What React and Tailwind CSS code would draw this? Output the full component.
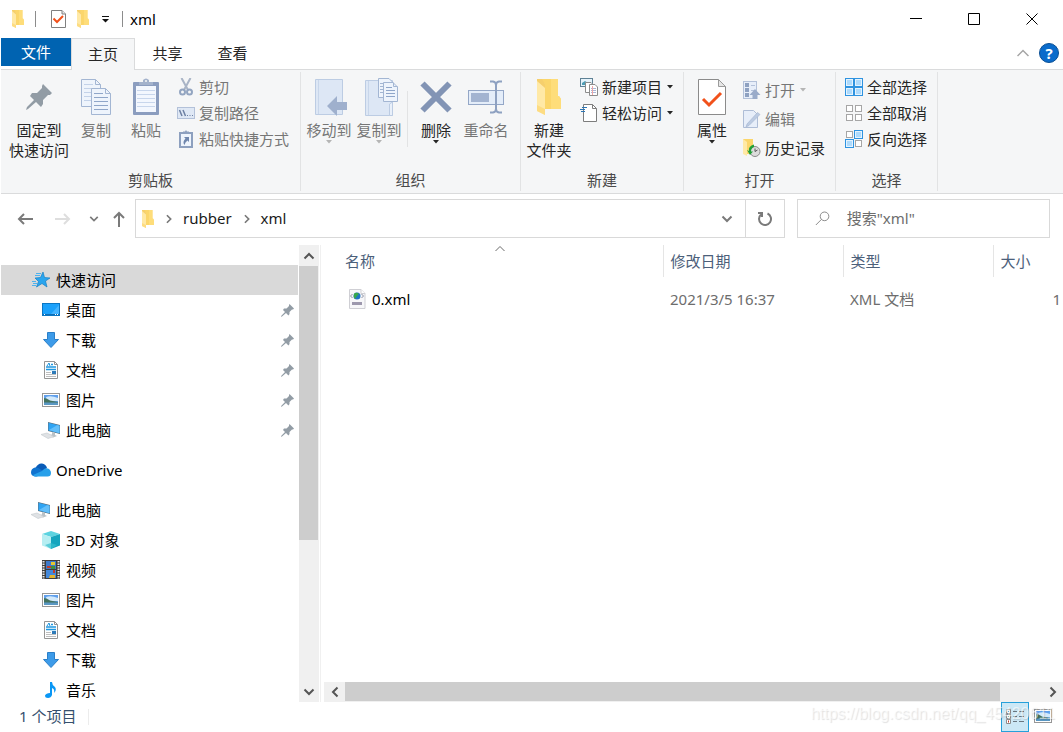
import { Fragment } from "react";

const FolderIcon = ({ className }) => (
    <svg className={className} viewBox="0 0 24 36" aria-hidden="true">
        <path d="M3 0H21V17H22L24 20V30H6Z" fill="#fbd66b" />
        <path d="M14 0H21V17H22L24 20V30H14Z" fill="#ffdf80" opacity=".7" />
        <path d="M0 0L8 5V36L0 32Z" fill="#ffe9a6" />
        <path d="M0 0H5L8 5V9L0 2Z" fill="#f6cf6c" />
        <path d="M0 26L8 30V36L0 32Z" fill="#fddc82" />
    </svg>
);

const CheckDocIcon = ({ className }) => (
    <svg className={className} viewBox="0 0 28 36" aria-hidden="true">
        <path d="M.5 .5H20.5L27.5 7.5V35.5H.5Z" fill="#fff" stroke="#8b8b8b" />
        <path d="M20.5 .5V7.5H27.5Z" fill="#e6e6e6" stroke="#9b9b9b" />
        <path d="M5 20L11 26L23 14" fill="none" stroke="#f1511b" strokeWidth="3" />
    </svg>
);

const SmallCheckDocIcon = () => (
    <svg width="15" height="18" viewBox="0 0 15 18" aria-hidden="true">
        <path d="M.5 .5H11L14.500 4V17.500H.5Z" fill="#fff" stroke="#808080" />
        <path d="M11 .5V4H14.500" fill="#e6e6e6" stroke="#808080" />
        <path d="M2.500 8.500L6 12L12 6" fill="none" stroke="#f1511b" strokeWidth="2" />
    </svg>
);

const PinIcon = ({ className }) => (
    <svg className={className} viewBox="0 0 26 26" aria-hidden="true">
        <path d="M17 0L26 9L24 11H22L17 16V20L15 23L10 18L2 25L0 26L1 23L8 16L4 12L6 9H11L16 4V2Z" fill="#929ca5" />
    </svg>
);

const CopyIcon = () => (
    <svg width="30" height="36" viewBox="0 0 30 36" fill="#eef4fc" stroke="#a3b6d3" aria-hidden="true">
        <path d="M.5 .5H14.5L19.5 5.5V27.5H.5Z" />
        <path d="M14.5 .5V5.5H19.5" fill="none" />
        <path d="M3 5.5H12M3 9.5H17M3 13.5H17M3 17.5H17M3 21.5H17" stroke="#c3d2e9" />
        <path d="M10.5 9.5H24.5L29.5 14.5V35.5H10.5Z" />
        <path d="M24.5 9.5V14.5H29.5" fill="none" />
        <path d="M13 14.5H22M13 18.5H27M13 22.5H27M13 26.5H27M13 30.5H27" stroke="#8fa6c9" />
    </svg>
);

const PasteIcon = () => (
    <svg width="26" height="38" viewBox="0 0 26 38" aria-hidden="true">
        <rect y="4" width="26" height="33" rx="1" fill="#8b9dbf" />
        <rect x="3" y="8" width="20" height="26" fill="#f3f7fe" />
        <path d="M4 12.5H22M4 16.5H22M4 20.5H22M4 24.5H22M4 28.5H22" stroke="#c8d6ec" />
        <path d="M6 4H10V2Q13 -1 16 2V4H20V7H6Z" fill="#a3b2cc" />
        <circle cx="13" cy="3" r="1" fill="#f5f6f7" />
    </svg>
);

const MoveToIcon = () => (
    <svg width="38" height="38" viewBox="-4 0 38 38" aria-hidden="true">
        <path d="M1.5 1.5H28.5V36.5H1.5Z" fill="#dde7f5" stroke="#bccce3" />
        <path d="M4.5 2V36" stroke="#c8d6ea" />
        <path d="M13 28L23 18V24H33V32H23V38Z" fill="#9fb0cd" />
    </svg>
);

const CopyToIcon = () => (
    <svg width="38" height="38" viewBox="-4 0 38 38" aria-hidden="true">
        <path d="M1.5 2.5H28.5V37.5H1.5Z" fill="#dde7f5" stroke="#bccce3" />
        <path d="M4.5 3V37" stroke="#c8d6ea" />
        <path d="M25.5 37.5V26L28.5 24V37.5Z" fill="#e9f0fa" stroke="#bccce3" />
        <path d="M14.5 .5H25L28.5 4V19.5H14.5Z" fill="#eef4fc" stroke="#a3b6d3" />
        <path d="M16 5.5H20M16 8.5H20M16 11.5H20M16 14.5H20" stroke="#a3b6d3" />
        <path d="M19.5 4.5H29L33.5 9V23.5H19.5Z" fill="#eef4fc" stroke="#a3b6d3" />
        <path d="M29.5 4.5V8.5H33.5" fill="none" stroke="#a3b6d3" />
        <path d="M22 9.5H28M22 12.5H31M22 15.5H31M22 18.5H31" stroke="#8fa6c9" />
    </svg>
);

const DeleteIcon = () => (
    <svg width="32" height="32" viewBox="0 0 32 32" stroke="#8294b5" strokeWidth="6" aria-hidden="true">
        <path d="M2.500 2.500L29.500 29.500M29.500 2.500L2.500 29.500" />
    </svg>
);

const RenameIcon = () => (
    <svg width="38" height="34" viewBox="-1 0 38 34" aria-hidden="true">
        <rect x=".5" y="10.500" width="35" height="14" fill="#e4edf9" stroke="#94a7c7" />
        <rect x="3" y="13" width="18" height="9" fill="#a3b4d1" />
        <path d="M22 1.500H25Q28 2 28 5V29Q28 32 25 32.500H22M34 1.500H31Q28 2 28 5M34 32.500H31Q28 32 28 29" fill="none" stroke="#8ea1c1" strokeWidth="2" />
    </svg>
);

const CutIcon = () => (
    <svg width="18" height="18" viewBox="0 0 18 18" fill="none" stroke="#93a5c1" aria-hidden="true">
        <path d="M4.500 0L11 12M13.500 0L7 12" strokeWidth="2" stroke="#a9b4c6" />
        <circle cx="5.500" cy="14" r="2.500" strokeWidth="2" />
        <circle cx="12.500" cy="14" r="2.500" strokeWidth="2" />
    </svg>
);

const CopyPathIcon = () => (
    <svg width="18" height="12" viewBox="0 0 18 12" aria-hidden="true">
        <rect x=".5" y=".5" width="17" height="11" fill="#dfe8f5" stroke="#b3c1d9" />
        <path d="M2.500 3L5 9M6 3L8.500 9" stroke="#6d80a3" strokeWidth="1.500" />
        <path d="M10 8.500H11M12.500 8.500H13.500M15 8.500H16" stroke="#6d80a3" />
    </svg>
);

const ShortcutIcon = () => (
    <svg width="18" height="18" viewBox="0 0 18 18" aria-hidden="true">
        <rect x="3" y="3" width="12" height="14" fill="#eef4fc" stroke="#8da0bf" strokeWidth="2" />
        <path d="M6 1.500H8L9 0L10 1.500H12V4H6Z" fill="#8da0bf" />
        <path d="M7 7H12V12L10.500 10.500Q8 12 7.500 15Q5 12 8.500 8.500Z" fill="#6f86ad" />
    </svg>
);

const NewItemIcon = () => (
    <svg width="18" height="18" viewBox="0 0 18 18" aria-hidden="true">
        <rect x=".5" y=".5" width="12" height="8" fill="#e6f3fb" stroke="#5e8195" />
        <path d="M2 7V5L5 3L8 5V7Z" fill="#4d9db5" />
        <path d="M5.500 4.500H11L13.500 7V14.500H5.500Z" fill="#fff" stroke="#8c8c8c" />
        <path d="M9.500 6.500H15L17.500 9V17.500H9.500Z" fill="#fff" stroke="#8c8c8c" />
        <path d="M11 10.500H16M11 12.500H16M11 14.500H16" stroke="#aab6d6" />
        <path d="M12.500 8V17" stroke="#f0a5a5" />
    </svg>
);

const EasyAccessIcon = () => (
    <svg width="18" height="18" viewBox="0 0 18 18" aria-hidden="true">
        <path d="M3.500 .5H12.500L16.500 4.500V17.500H3.500Z" fill="#fff" stroke="#7d7d7d" />
        <path d="M12.500 .5V4.500H16.500" fill="none" stroke="#7d7d7d" />
        <path d="M0 5.500H5M2 3.500H7M1 7.500H5" stroke="#2c76b5" />
    </svg>
);

const OpenIcon = () => (
    <svg width="18" height="18" viewBox="0 0 18 18" aria-hidden="true">
        <rect x=".5" y=".5" width="13" height="17" fill="#e7eef9" stroke="#b3c1d9" />
        <path d="M2 2H6V6H2ZM2 7H6V11H2ZM2 12H6V16H2Z" fill="#8ea1c1" />
        <path d="M8 4.500H12M8 9.500H12" stroke="#b3c1d9" />
        <path d="M12 8L17.500 14H14.500V18H9.500V14H6.500Z" fill="#9aabc9" />
    </svg>
);

const EditIcon = () => (
    <svg width="18" height="18" viewBox="0 0 18 18" aria-hidden="true">
        <path d="M.5 .5H10.500L14.500 4.500V17.500H.5Z" fill="#e7eef9" stroke="#aebdd6" />
        <path d="M4 14L14.500 2.500L17 4.500L6 15.500L3 17Z" fill="#bccbe2" stroke="#a3b3cf" strokeWidth=".6" />
    </svg>
);

const HistoryIcon = () => (
    <svg width="18" height="18" viewBox="0 0 18 18" aria-hidden="true">
        <path d="M0 0H10V15H3Z" fill="#fbd66b" />
        <path d="M0 0L4 3V17L0 15Z" fill="#ffe9a6" />
        <circle cx="12" cy="12.500" r="5" fill="#dcdcdc" stroke="#8a8a8a" />
        <path d="M12 9.500V12.500L14.500 11" fill="none" stroke="#555" />
        <path d="M11 5.500Q5 7 6 12L4 11L7 16L10 12.500L8 12.500Q8 9 11 8Z" fill="#21a038" />
    </svg>
);

function SelectIcon({ on }) {
    return (
        <svg width="18" height="18" viewBox="0 0 18 18" aria-hidden="true">
            {[[0, 0], [9, 0], [0, 9], [9, 9]].map(([x, y], i) => on[i] == '1' ?
                <g key={i}>
                    <rect x={x + .5} y={y + .5} width="8" height="8" fill="#e4f3fe" stroke="#2f93e0" />
                    <rect x={x + 2} y={y + 2} width="5" height="5" fill="#addafc" />
                </g> :
                <rect key={i} x={x + 1.5} y={y + 1.5} width="6" height="6" fill="#fff" stroke="#a6a6a6" />
            )}
        </svg>
    );
}

const StarIcon = () => (
    <svg width="18" height="18" viewBox="0 0 18 18" aria-hidden="true">
        <path d="M11 1L12.500 6.500L18 7L13.500 10L15 16L10 12.500L4.500 16L6.500 10.500L3 7L8.500 6.500Z" fill="#2aa5ee" stroke="#1580c4" strokeWidth=".7" />
        <path d="M4 2.500H9M3 4.500H8M0 10.500H4M1 12.500H5M0 14.500H4" stroke="#4db2ee" />
    </svg>
);

const DesktopIcon = () => (
    <svg width="18" height="18" viewBox="0 0 18 18" aria-hidden="true">
        <rect x=".5" y="2.500" width="17" height="12" fill="#1ba1fb" stroke="#0a76c4" />
        <path d="M9 13L17 4V13Z" fill="#45b4ff" />
        <path d="M1 13.500H17" stroke="#0d6db4" />
        <path d="M2 13.500H3M13 13.500H14M15 13.500H16" stroke="#fff" />
    </svg>
);

const DownloadIcon = () => (
    <svg width="18" height="18" viewBox="0 0 18 18" aria-hidden="true">
        <path d="M5.500 1.500H12.500V8.500H16.500L9 16.500L1.500 8.500H5.500Z" fill="#3d9be9" stroke="#2b7fc8" />
    </svg>
);

const DocumentIcon = () => (
    <svg width="18" height="18" viewBox="0 0 18 18" aria-hidden="true">
        <path d="M2.500 .5H12.500L15.500 3.500V17.500H2.500Z" fill="#fff" stroke="#949494" />
        <path d="M12.500 .5V3.500H15.500" fill="none" stroke="#949494" />
        <path d="M5 5L7 2L8 5" fill="none" stroke="#1e96e0" />
        <path d="M9 3.500H11M4 6H14M4 8.500H14" stroke="#1e96e0" strokeWidth="1.500" />
        <path d="M4 11.500H9M4 13.500H14M4 15.500H14" stroke="#bdbdbd" />
        <rect x="10" y="10" width="4" height="3" fill="#2d7ab8" />
    </svg>
);

const PictureIcon = () => (
    <svg width="18" height="18" viewBox="0 0 18 18" aria-hidden="true">
        <rect x=".5" y="2.500" width="17" height="13" fill="#fff" stroke="#979797" />
        <rect x="2" y="4" width="14" height="10" fill="#5f9fec" />
        <path d="M4 6Q9 4 16 7V10H5Z" fill="#d2e9fb" />
        <path d="M2 7Q5 7 8 9.500L16 11V12H2Z" fill="#44735f" />
        <rect x="2" y="11.500" width="14" height="2.500" fill="#5a98c4" />
    </svg>
);

const PcIcon = () => (
    <svg width="20" height="18" viewBox="0 0 20 18" aria-hidden="true">
        <path d="M7 1L19 4V13L7 10Z" fill="#5c6f7c" />
        <path d="M7.500 1.800L18.500 4.500V12.300L7.500 9.500Z" fill="#2fa4f3" />
        <path d="M8 9L16 4.200L18.500 4.800V12.200Z" fill="#63bffa" />
        <path d="M11 11L14 12V14L16 15L12 16.500L7 14.500L11 13.500Z" fill="#b9c1c6" />
        <path d="M0 13.500L6 12L13 15.500L7 17.500Z" fill="#dfe2e5" stroke="#c3c8cc" strokeWidth=".6" />
    </svg>
);

const OneDriveIcon = () => (
    <svg width="20" height="14" viewBox="0 0 20 14" aria-hidden="true">
        <path d="M4.500 5Q7 0 11 .5Q15 1 16 5L10 9Z" fill="#0a5cb8" />
        <path d="M4 13.500Q0 13 0 9.500Q0 5.500 4 4.500Q7 4 9 6L14 9L6 13.500Z" fill="#1173cf" />
        <path d="M12 7Q14 4.500 17 5.500Q20 7 20 10Q20 13.500 16.500 13.500H4Q2.500 13 2 12L11 8Z" fill="#28a0ea" />
    </svg>
);

const CubeIcon = () => (
    <svg width="18" height="18" viewBox="0 0 18 18" aria-hidden="true">
        <path d="M0 3L9 0L18 3L9 6Z" fill="#5cd3e0" />
        <path d="M0 3L9 6V18L0 14.500Z" fill="#b6eef2" />
        <path d="M18 3L9 6V18L18 14.500Z" fill="#15a5be" />
        <path d="M3 14L9 12L15 14L9 18Z" fill="#38c0cf" opacity=".7" />
    </svg>
);

const VideoIcon = () => (
    <svg width="18" height="20" viewBox="0 0 18 20" aria-hidden="true">
        <rect width="18" height="19" fill="#3d3d3d" />
        <path d="M1.500 1V19M16.500 1V19" stroke="#e5e5e5" strokeWidth="2" strokeDasharray="1.500 1" />
        <rect x="4" y="1" width="10" height="8" fill="#3d79c9" />
        <rect x="4" y="10" width="10" height="8" fill="#4388da" />
        <path d="M9 2H13V5H9Z" fill="#e5c72e" />
        <path d="M5 6H9V8H5ZM11 10H13V13H11Z" fill="#c23b2c" />
        <path d="M9 6H13V9H9Z" fill="#3d8d3c" />
        <path d="M8 15H13V18H7Z" fill="#e5b42e" />
    </svg>
);

const MusicIcon = () => (
    <svg width="18" height="18" viewBox="0 0 18 18" aria-hidden="true">
        <path d="M8 1H10Q10 4 13 6Q15 9 12 12Q13 8 10 7V14Q9 17 6 17Q3 17 3 14.500Q4 12 8 12Z" fill="#0a97f5" />
    </svg>
);

const XmlIcon = () => (
    <svg width="18" height="20" viewBox="0 0 18 20" aria-hidden="true">
        <path d="M1.500 .5H13L17 4.500V19.500H1.500Z" fill="#f7f7f9" stroke="#cfcfd4" />
        <path d="M13 .5V4.500H17" fill="#fff" stroke="#cfcfd4" />
        <path d="M4.500 5L2.500 7L4.500 9M13.500 5L15.500 7L13.500 9" fill="none" stroke="#8b8fa1" />
        <circle cx="9" cy="7" r="3.500" fill="#1f74c4" />
        <path d="M7 4Q9 3 11 5L9 7L7 10Q5 8 6 5Z" fill="#37a84a" />
        <rect x="4" y="13" width="10" height="3" fill="#9d98ad" />
    </svg>
);

const DetailsIcon = () => (
    <svg width="18" height="18" viewBox="0 0 18 18" aria-hidden="true">
        <path d="M.5 1.500H4.500V5.500H.5ZM.5 6.500H4.500V10.500H.5ZM.5 11.500H4.500V15.500H.5Z" fill="#fff" stroke="#8c8c8c" />
        <path d="M2 3.500H3" stroke="#2272b9" />
        <path d="M2 8.500H3" stroke="#2e8f4e" />
        <path d="M2 13.500H3" stroke="#c0392b" strokeWidth="2" />
        <path d="M7 3.500H11M13 3.500H18M7 8.500H11M13 8.500H18M7 13.500H11M13 13.500H18" stroke="#6b7780" />
    </svg>
);

// chevron pointing up, turned with a rotate class where needed
const Chevron = ({ className }) => (
    <svg className={className} viewBox="0 0 12 12" fill="none" stroke="currentColor" strokeWidth="2" aria-hidden="true">
        <path d="M1.500 8.500L6 4L10.500 8.500" />
    </svg>
);

const Caret = ({ className = '' }) => (
    <svg className={className} width="6" height="4" viewBox="0 0 6 4" fill="currentColor" aria-hidden="true">
        <path d="M0 0H6L3 3.500Z" />
    </svg>
);

const Arrow = ({ className }) => (
    <svg className={className} width="16" height="16" viewBox="0 0 16 16" fill="none" stroke="currentColor" strokeWidth="2" aria-hidden="true">
        <path d="M16 8H2M7 3L2 8L7 13" />
    </svg>
);

function BigButton({ icon, lines, wide, disabled, caret }) {
    return (
        <button disabled={disabled} className={`flex shrink-0 flex-col items-center pt-[7px] leading-5 ${wide ? 'w-16' : 'w-[50px]'} ${disabled ? 'text-[#767676]' : 'text-[#262626]'}`}>
            <span className="flex h-10 items-center justify-center">{icon}</span>
            <span className="mt-[3px] flex flex-col whitespace-nowrap">
                {lines.map(l => <span key={l}>{l}</span>)}
            </span>
            {caret && <Caret className={disabled ? 'text-[#b5b5b5]' : ''} />}
        </button>
    );
}

function SmallButton({ icon, label, disabled, caret }) {
    return (
        <button disabled={disabled} className={`flex items-center gap-1 whitespace-nowrap ${disabled ? 'text-[#767676]' : 'text-[#262626]'}`}>
            <span className="flex w-[18px] justify-center">{icon}</span>
            {label}
            {caret && <Caret className={`ml-px ${disabled ? 'text-[#b5b5b5]' : ''}`} />}
        </button>
    );
}

function Group({ title, className, children }) {
    return (
        <section aria-label={title} className={`my-0.5 flex shrink-0 flex-col justify-between border-r border-[#e2e3e4] ${className}`}>
            <div className="-mt-0.5 flex pl-[3px]">{children}</div>
            <div className="pb-px text-center leading-5 text-[#4a4a4a]">{title}</div>
        </section>
    );
}

const Column = ({ tall, children }) => (
    <div className={`grid content-start pl-1.5 ${tall ? 'auto-rows-[29px] pt-[5px]' : 'auto-rows-[26px] pt-1'}`}>{children}</div>
);

function Ribbon() {
    return (
        <div className="ml-px flex h-[125px] shrink-0 overflow-hidden border-y border-[#dadbdc] bg-[#f5f6f7]">
            <Group title="剪贴板" className="w-[300px]">
                <div className="ml-[3px] flex">
                    <BigButton icon={<PinIcon className="h-[26px] w-[26px]" />} lines={['固定到', '快速访问']} wide />
                    <BigButton icon={<CopyIcon />} lines={['复制']} disabled />
                    <BigButton icon={<PasteIcon />} lines={['粘贴']} disabled />
                </div>
                <Column>
                    <SmallButton icon={<CutIcon />} label="剪切" disabled />
                    <SmallButton icon={<CopyPathIcon />} label="复制路径" disabled />
                    <SmallButton icon={<ShortcutIcon />} label="粘贴快捷方式" disabled />
                </Column>
            </Group>
            <Group title="组织" className="w-[220px]">
                <BigButton icon={<MoveToIcon />} lines={['移动到']} disabled caret />
                <BigButton icon={<CopyToIcon />} lines={['复制到']} disabled caret />
                <div className="mx-[3px] mt-[21px] h-14 w-px bg-[#e2e3e4]"></div>
                <BigButton icon={<DeleteIcon />} lines={['删除']} caret />
                <BigButton icon={<RenameIcon />} lines={['重命名']} disabled />
            </Group>
            <Group title="新建" className="w-[163px]">
                <BigButton icon={<FolderIcon className="h-9 w-6" />} lines={['新建', '文件夹']} />
                <Column>
                    <SmallButton icon={<NewItemIcon />} label="新建项目" caret />
                    <SmallButton icon={<EasyAccessIcon />} label="轻松访问" caret />
                </Column>
            </Group>
            <Group title="打开" className="w-[152px]">
                <BigButton icon={<CheckDocIcon className="h-9 w-7" />} lines={['属性']} caret />
                <Column tall>
                    <SmallButton icon={<OpenIcon />} label="打开" disabled caret />
                    <SmallButton icon={<EditIcon />} label="编辑" disabled />
                    <SmallButton icon={<HistoryIcon />} label="历史记录" />
                </Column>
            </Group>
            <Group title="选择" className="w-[102px]">
                <Column>
                    <SmallButton icon={<SelectIcon on="1111" />} label="全部选择" />
                    <SmallButton icon={<SelectIcon on="0000" />} label="全部取消" />
                    <SmallButton icon={<SelectIcon on="0110" />} label="反向选择" />
                </Column>
            </Group>
        </div>
    );
}

function TitleBar() {
    return (
        <header className="flex h-[38px] shrink-0 items-center pl-3">
            <FolderIcon className="h-[18px] w-3" />
            <div className="ml-[11px] h-4 w-px bg-[#8c8c8c]"></div>
            <button aria-label="属性" className="ml-[15px]"><SmallCheckDocIcon /></button>
            <button aria-label="新建文件夹" className="ml-[11px]"><FolderIcon className="h-[18px] w-3" /></button>
            <button aria-label="自定义快速访问工具栏" className="ml-[13px]">
                <svg width="7" height="8" viewBox="0 0 7 8" aria-hidden="true">
                    <path d="M0 1.500H7" stroke="#111" />
                    <path d="M0 4H7L3.500 7.500Z" fill="#111" />
                </svg>
            </button>
            <div className="ml-[13px] h-4 w-px bg-[#8c8c8c]"></div>
            <h1 className="ml-[7px] flex-grow">xml</h1>
            <div className="mr-0.5 flex h-full">
                {[['最小化', 'M0 5.500H12'], ['最大化', 'M.5 .5H11.500V11.500H.5Z'], ['关闭', 'M.5 .5L11.500 11.500M11.500 .5L.5 11.500']].map(([name, d]) => (
                    <button key={name} aria-label={name} className="flex w-[58px] items-center justify-center">
                        <svg width="12" height="12" viewBox="0 0 12 12" fill="none" stroke="#000" aria-hidden="true"><path d={d} /></svg>
                    </button>
                ))}
            </div>
        </header>
    );
}

function Tabs() {
    return (
        <nav className="relative z-10 ml-px flex h-[31px] shrink-0 text-[#262626]">
            <button className="h-7 w-[70px] bg-[#0063b1] text-white">文件</button>
            <button className="-mb-px h-8 w-16 border border-b-0 border-[#dadbdc] bg-[#f5f6f7] pb-0.5">主页</button>
            <button className="w-[65px] pb-0.5">共享</button>
            <button className="w-[65px] pb-0.5">查看</button>
            <div className="flex flex-grow items-center justify-end gap-2.5 pr-1 pb-px">
                <button aria-label="最小化功能区" className="text-[#a5a5a5]">
                    <svg width="12" height="8" viewBox="0 0 12 8" fill="none" stroke="currentColor" strokeWidth="1.500" aria-hidden="true"><path d="M.5 7L6 1.500L11.500 7" /></svg>
                </button>
                <button aria-label="帮助" className="h-5 w-5 rounded-full border border-[#0a4f94] bg-[#0a6bcb] text-center leading-[18px] font-bold text-white">?</button>
            </div>
        </nav>
    );
}

function AddressBar() {
    return (
        <div className="mt-[5px] flex h-[39px] shrink-0 items-center pr-[13px] pl-[17px] text-[#7a7a7a]">
            <button aria-label="后退"><Arrow /></button>
            <button aria-label="前进" disabled className="ml-[22px] text-[#dedede]"><Arrow className="rotate-180" /></button>
            <button aria-label="最近浏览的位置" className="ml-[18px]"><Chevron className="h-2.5 w-2.5 rotate-180" /></button>
            <button aria-label="上移" className="ml-3"><Arrow className="rotate-90" /></button>
            <div className="ml-2 flex h-full flex-grow items-center border border-[#d9d9d9] pl-1.5 text-[#1a1a1a]">
                <FolderIcon className="h-[18px] w-3" />
                {['rubber', 'xml'].map(p => (
                    <Fragment key={p}>
                        <Chevron className="mr-[9px] ml-2.5 h-2.5 w-2.5 rotate-90 text-[#7a7a7a]" />
                        <button className="pb-px">{p}</button>
                    </Fragment>
                ))}
                <button aria-label="上一个位置" className="mr-3 ml-auto text-[#7a7a7a]"><Chevron className="h-3 w-3 rotate-180" /></button>
                <button aria-label="刷新" className="flex h-full w-[39px] items-center justify-center border-l border-[#d9d9d9] text-[#7a7a7a]">
                    <svg width="16" height="16" viewBox="0 0 16 16" fill="none" stroke="currentColor" strokeWidth="2" aria-hidden="true">
                        <path d="M10.500 2.500A6 6 0 1 1 4 3.500" />
                        <path d="M1 2H5V6" />
                    </svg>
                </button>
            </div>
            <label className="ml-3 flex h-full w-[253px] shrink-0 items-center border border-[#d9d9d9] pl-[17px]">
                <svg width="17" height="17" viewBox="0 0 17 17" fill="none" stroke="#7a7a7a" aria-hidden="true">
                    <circle cx="11" cy="6" r="5" />
                    <path d="M7.500 9.500L1 16" />
                </svg>
                <input aria-label="搜索" placeholder={'搜索"xml"'} className="ml-[17px] w-full min-w-0 pb-px outline-none placeholder:text-[#6d6d6d]" />
            </label>
        </div>
    );
}

const places = [
    { name: '快速访问', icon: <StarIcon />, root: true, active: true },
    { name: '桌面', icon: <DesktopIcon />, pinned: true },
    { name: '下载', icon: <DownloadIcon />, pinned: true },
    { name: '文档', icon: <DocumentIcon />, pinned: true },
    { name: '图片', icon: <PictureIcon />, pinned: true },
    { name: '此电脑', icon: <PcIcon />, pinned: true },
    { name: 'OneDrive', icon: <OneDriveIcon />, root: true },
    { name: '此电脑', icon: <PcIcon />, root: true },
    { name: '3D 对象', icon: <CubeIcon /> },
    { name: '视频', icon: <VideoIcon /> },
    { name: '图片', icon: <PictureIcon /> },
    { name: '文档', icon: <DocumentIcon /> },
    { name: '下载', icon: <DownloadIcon /> },
    { name: '音乐', icon: <MusicIcon /> },
];

function Sidebar() {
    return (
        <aside className="flex w-[321px] shrink-0 border-r border-[#f0f0f0] pr-px pl-px">
            <ul className="flex-grow overflow-hidden pt-5">
                {places.map((p, i) => (
                    <li key={i} className={p.root && i > 0 ? 'mt-2.5' : ''}>
                        <button className={`flex h-[30px] w-[297px] items-center pr-1 ${p.root ? 'pl-[30px]' : 'pl-10'} ${p.active ? 'bg-[#d9d9d9]' : ''}`}>
                            <span className="mr-[5px] flex w-5 shrink-0 justify-center">{p.icon}</span>
                            {p.name}
                            {p.pinned && <PinIcon className="ml-auto h-[13px] w-[13px]" />}
                        </button>
                    </li>
                ))}
            </ul>
            <div className="flex w-5 shrink-0 flex-col bg-[#f0f0f0] text-[#555]">
                <button aria-label="向上滚动" className="flex h-[21px] items-center justify-center"><Chevron className="h-3 w-3" /></button>
                <div className="min-h-0 flex-grow"><div className="h-[66%] w-[19px] bg-[#cdcdcd]"></div></div>
                <button aria-label="向下滚动" className="flex h-[21px] items-center justify-center"><Chevron className="h-3 w-3 rotate-180" /></button>
            </div>
        </aside>
    );
}

function FileList() {
    return (
        <main className="flex min-w-0 flex-grow flex-col">
            <div className="flex-grow overflow-hidden">
                <table className="w-full table-fixed text-left">
                    <thead className="text-[#4c607a]">
                        <tr className="h-8">
                            <th className="relative w-[342px] border-r border-[#e5e5e5] pl-6 font-normal">
                                名称
                                <svg className="absolute top-px left-[174px]" width="10" height="6" viewBox="0 0 10 6" fill="none" stroke="#6a6a6a" aria-hidden="true"><path d="M.5 5L5 .5L9.500 5" /></svg>
                            </th>
                            <th className="w-[180px] border-r border-[#e5e5e5] pl-[7px] font-normal">修改日期</th>
                            <th className="w-[150px] border-r border-[#e5e5e5] pl-[7px] font-normal">类型</th>
                            <th className="pl-[7px] font-normal">大小</th>
                        </tr>
                    </thead>
                    <tbody className="text-[#6d6d6d]">
                        <tr className="h-11">
                            <td className="pl-[27px] text-black">
                                <span className="flex items-center gap-1.5"><XmlIcon />0.xml</span>
                            </td>
                            <td className="pl-[7px]">2021/3/5 16:37</td>
                            <td className="pl-[7px]">XML 文档</td>
                            <td className="pr-0.5 text-right">1</td>
                        </tr>
                    </tbody>
                </table>
            </div>
            <div className="ml-[3px] flex h-5 shrink-0 bg-[#f0f0f0] text-[#555]">
                <button aria-label="向左滚动" className="flex w-[21px] items-center justify-center"><Chevron className="h-3 w-3 -rotate-90" /></button>
                <div className="flex-grow"><div className="h-[19px] w-[94%] bg-[#cdcdcd]"></div></div>
                <button aria-label="向右滚动" className="flex w-[21px] items-center justify-center"><Chevron className="h-3 w-3 rotate-90" /></button>
            </div>
        </main>
    );
}

function StatusBar() {
    return (
        <footer className="relative flex h-[30px] shrink-0 items-center pr-[11px] pl-[19px] text-[#35506e]">
            <span className="pb-0.5">1 个项目</span>
            <div className="ml-3 h-4 w-px bg-[#ececec]"></div>
            <button aria-label="详细信息" className="ml-auto flex h-[30px] w-7 items-center justify-center border border-[#26a0da] bg-[#cce8f6]"><DetailsIcon /></button>
            <button aria-label="大缩略图" className="ml-[5px] pb-0.5"><PictureIcon /></button>
            <div className="pointer-events-none absolute top-0 right-2 font-['Liberation_Sans',sans-serif] text-base text-white/60 [text-shadow:1px_1px_1px_rgba(0,0,0,0.12)]">https://blog.csdn.net/qq_45420611</div>
        </footer>
    );
}

export default function App() {
    return (
        <div className="flex h-screen flex-col overflow-hidden bg-white font-['Noto_Sans','Noto_Sans_CJK_SC',sans-serif] text-[15px] leading-5 text-black">
            <TitleBar />
            <Tabs />
            <Ribbon />
            <AddressBar />
            <div className="mt-[7px] flex min-h-0 flex-grow">
                <Sidebar />
                <FileList />
            </div>
            <StatusBar />
        </div>
    );
}
